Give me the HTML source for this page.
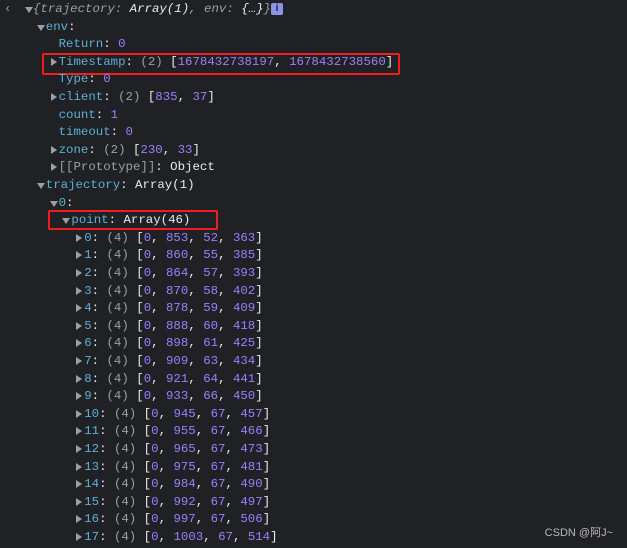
<!DOCTYPE html>
<html><head><style>
body{margin:0;background:#202124;width:627px;height:548px;overflow:hidden;position:relative;font-family:"Liberation Mono",monospace;font-size:12.4px;color:#e8eaed}
.l{position:absolute;height:17px;line-height:17px;white-space:pre}
.k{color:#5db0d7}.n{color:#9980ff}.g{color:#9aa0a6}.i{font-style:italic}
.a{position:absolute;width:0;height:0}
.ar{border-left:6px solid #9aa0a6;border-top:4px solid transparent;border-bottom:4px solid transparent;margin-top:4px}
.ad{border-top:6px solid #9aa0a6;border-left:4px solid transparent;border-right:4px solid transparent;margin-top:6px}
.box{position:absolute;border:2px solid #f01e1e;border-radius:2px}
.wm{position:absolute;right:14px;top:524px;font-family:"Liberation Sans","Noto Sans CJK SC",sans-serif;font-size:11px;color:#bbb}
</style></head><body>
<div class="l" style="left:4px;top:1px;color:#9aa0a6">‹</div>
<div class="box" style="left:42px;top:53px;width:354px;height:18px"></div>
<div class="box" style="left:48px;top:210px;width:166px;height:16px"></div>
<div id="c"></div>
<div class="l i" style="left:33px;top:1px"><span class="g">{trajectory: </span>Array(1)<span class="g">, env: </span>{…}<span class="g">}</span></div>
<div style="position:absolute;left:271px;top:3px;width:12px;height:12px;background:#8b93e8;border-radius:2px;color:#202124;font:bold 10px 'Liberation Sans',sans-serif;text-align:center;line-height:12px">i</div>
<div class="wm">CSDN @阿J~</div>
<script>
var rows=[
[1,'d','<span class="k">env</span>:'],
[2,'','<span class="k">Return</span>: <span class="n">0</span>'],
[2,'r','<span class="k">Timestamp</span>: <span class="g">(2)</span> [<span class="n">1678432738197</span>, <span class="n">1678432738560</span>]'],
[2,'','<span class="k">Type</span>: <span class="n">0</span>'],
[2,'r','<span class="k">client</span>: <span class="g">(2)</span> [<span class="n">835</span>, <span class="n">37</span>]'],
[2,'','<span class="k">count</span>: <span class="n">1</span>'],
[2,'','<span class="k">timeout</span>: <span class="n">0</span>'],
[2,'r','<span class="k">zone</span>: <span class="g">(2)</span> [<span class="n">230</span>, <span class="n">33</span>]'],
[2,'r','<span class="g">[[Prototype]]</span>: Object'],
[1,'d','<span class="k">trajectory</span>: Array(1)'],
[2,'d','<span class="k">0</span>:'],
[3,'d','<span class="k">point</span>: Array(46)']];
var d=[[853,52,363],[860,55,385],[864,57,393],[870,58,402],[878,59,409],[888,60,418],[898,61,425],[909,63,434],[921,64,441],[933,66,450],[945,67,457],[955,67,466],[965,67,473],[975,67,481],[984,67,490],[992,67,497],[997,67,506],[1003,67,514]];
d.forEach(function(v,i){rows.push([4,'r','<span class="k">'+i+'</span>: <span class="g">(4)</span> [<span class="n">0</span>, <span class="n">'+v[0]+'</span>, <span class="n">'+v[1]+'</span>, <span class="n">'+v[2]+'</span>]'])});
var h='';
h+='<div class="a ad" style="left:25px;top:1px"></div>';
rows.forEach(function(r,i){var t=1+(i+1)*17.6;var x=33+r[0]*12.8;
if(r[1])h+='<div class="a '+(r[1]=='d'?'ad':'ar')+'" style="left:'+(x-9+(r[1]=='r'?1:0))+'px;top:'+t+'px"></div>';
h+='<div class="l" style="left:'+x+'px;top:'+t+'px">'+r[2]+'</div>';});
document.getElementById('c').innerHTML=h;
</script>
</body></html>
